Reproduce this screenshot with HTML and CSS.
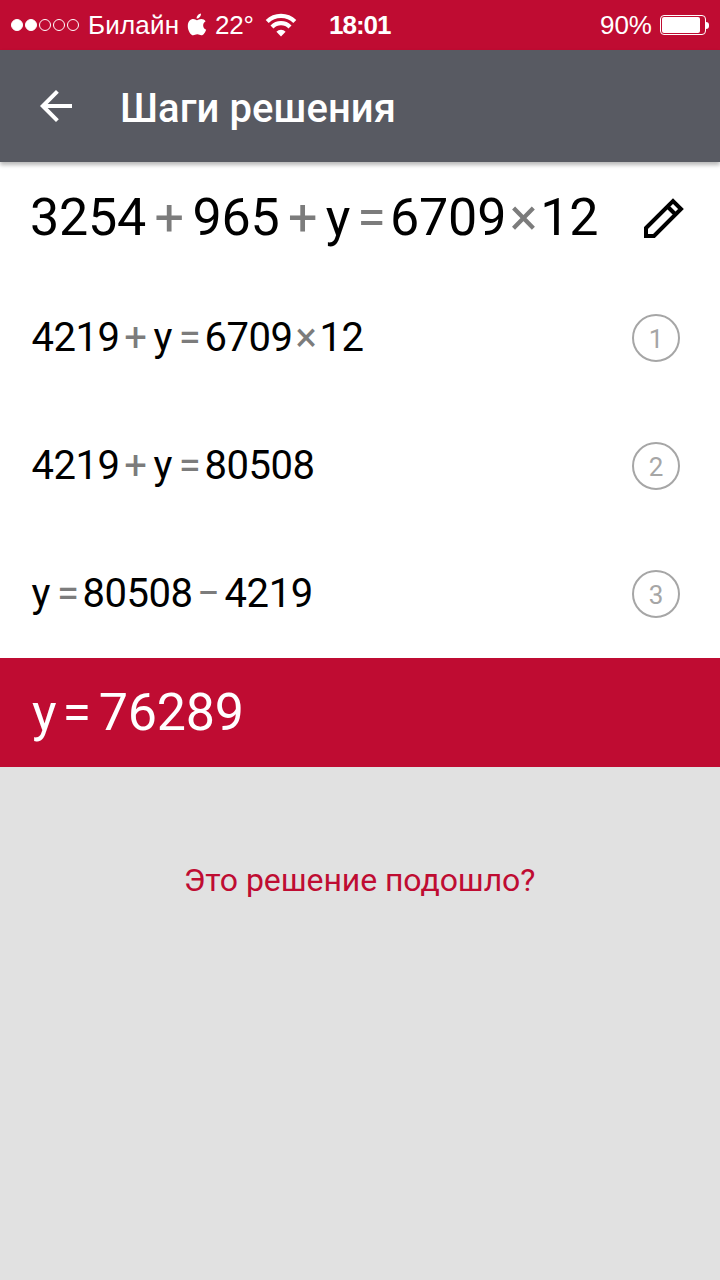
FILE: index.html
```html
<!DOCTYPE html>
<html lang="ru">
  <head>
    <meta charset="UTF-8" />
    <title>Шаги решения</title>
    <link rel="stylesheet" href="styles.css">
  </head>
  <body>
    <div class="status-bar">
      <div class="signal">
        <span class="dot full"></span>
        <span class="dot full"></span>
        <span class="dot"></span>
        <span class="dot"></span>
        <span class="dot"></span>
      </div>
      <span class="carrier">Билайн</span>
      <svg class="apple" width="20" height="24" viewBox="0 0 20 24">
        <path d="M14 0.5C14.2 3.2 12 5.6 9.6 5.6C9.4 3 11.6 0.8 14 0.5ZM10 7.2C11 7.2 12.2 6 14.4 6C16 6 17.6 6.8 18.6 8.2C15 10.4 15.6 15.3 19.2 16.7C18.4 18.9 16.6 22.3 14.4 22.3C12.8 22.3 12.2 21.3 10.3 21.3C8.4 21.3 7.7 22.3 6.2 22.3C3.8 22.3 0.8 17.6 0.8 13.2C0.8 8.6 3.5 6.1 6.2 6.1C8 6.1 9 7.2 10 7.2Z" />
      </svg>
      <span class="temp">22°</span>
      <svg class="wifi" width="32" height="24" viewBox="0 0 32 24">
        <path class="wave" d="M2.2 8.6A19.6 19.6 0 0 1 29.8 8.6" />
        <path class="wave" d="M7 14A12.5 12.5 0 0 1 25 14" />
        <path d="M11.4 18.8A6.3 6.3 0 0 1 20.6 18.8L16 23.4Z" />
      </svg>
      <span class="time">18:01</span>
      <span class="percent">90%</span>
      <div class="battery"><div class="charge" style="width: 90%"></div></div>
      <div class="battery-tip"></div>
    </div>

    <div class="toolbar">
      <svg class="back" width="32" height="32" viewBox="0 0 32 32">
        <path d="M32 16H2M17.4 1.4L2.8 16L17.4 30.6" />
      </svg>
      <h1>Шаги решения</h1>
    </div>

    <div class="steps">
      <div class="row task">
        <div class="expr">3254<i class="op plus">+</i>965<i class="op plus">+</i>y<i class="op eq">=</i>6709<i class="op times">×</i>12</div>
        <svg class="edit" width="42" height="42" viewBox="0 0 42 42">
          <path d="M3 31L30 4L38 12L11 39H3ZM24.5 9.5L32.5 17.5" />
        </svg>
      </div>
      <div class="row">
        <div class="expr">4219<i class="op plus">+</i>y<i class="op eq">=</i>6709<i class="op times">×</i>12</div>
        <div class="num">1</div>
      </div>
      <div class="row">
        <div class="expr">4219<i class="op plus">+</i>y<i class="op eq">=</i>80508</div>
        <div class="num">2</div>
      </div>
      <div class="row">
        <div class="expr">y<i class="op eq">=</i>80508<i class="op minus">−</i>4219</div>
        <div class="num">3</div>
      </div>
    </div>

    <div class="answer">
      <div class="expr">y<i class="op eq">=</i>76289</div>
    </div>

    <div class="feedback">Это решение подошло?</div>
  </body>
</html>
```

FILE: styles.css
```css
body {
  margin: 0;
  min-height: 1280px;
  font-family: Roboto, sans-serif;
  background-color: #e1e1e1;
  color: #000;
}

.status-bar {
  display: flex;
  align-items: center;
  box-sizing: border-box;
  height: 50px;
  padding: 0 11px;
  background-color: #bf0c32;
  color: #fff;
  font-family: "Liberation Sans", Arial, sans-serif;
  font-size: 26px;
  line-height: 50px;
}

.signal {
  display: flex;
  gap: 2px;
}

.dot {
  box-sizing: border-box;
  width: 12px;
  height: 12px;
  border: 1.5px solid #fff;
  border-radius: 50%;
}

.dot.full {
  background-color: #fff;
}

.carrier {
  width: 92px;
  margin-left: 9px;
  letter-spacing: 0.2px;
}

.apple {
  margin-left: 7px;
  fill: #fff;
}

.temp {
  width: 39px;
  margin-left: 8px;
  letter-spacing: -0.2px;
}

.wifi {
  margin-left: 11px;
  fill: #fff;
}

.wifi .wave {
  fill: none;
  stroke: #fff;
  stroke-width: 4.2;
}

.time {
  margin-left: 32px;
  font-weight: bold;
  letter-spacing: -1px;
}

.percent {
  margin-left: auto;
}

.battery {
  box-sizing: border-box;
  width: 46px;
  height: 20px;
  margin-left: 8px;
  padding: 1px;
  border: 1px solid #fff;
  border-radius: 4px;
}

.charge {
  height: 100%;
  border-radius: 2px;
  background-color: #fff;
}

.battery-tip {
  width: 3px;
  height: 7px;
  border-radius: 0 3px 3px 0;
  background-color: #fff;
}

.toolbar {
  position: relative;
  display: flex;
  align-items: center;
  height: 112px;
  padding-left: 40px;
  background-color: #585a62;
  color: #fff;
  box-shadow: 0 3px 4px rgba(0, 0, 0, 0.28);
}

.back {
  fill: none;
  stroke: #fff;
  stroke-width: 4;
}

.toolbar h1 {
  margin: 5px 0 0 48px;
  font-size: 40px;
  font-weight: 500;
  letter-spacing: 0.08px;
}

.steps {
  height: 496px;
  background-color: #fff;
}

.row {
  display: flex;
  align-items: center;
  justify-content: space-between;
  height: 128px;
  padding: 0 40px 0 31.5px;
}

.row.task {
  height: 112px;
  padding: 0 35px 0 30px;
}

.expr {
  margin-bottom: 2px;
  font-size: 40px;
  letter-spacing: -0.45px;
  white-space: nowrap;
}

.task .expr,
.answer .expr {
  font-size: 52px;
  letter-spacing: -0.2px;
}

.op {
  color: #7c7c7c;
  font-style: normal;
}

.plus {
  margin: 0 7px 0 4.5px;
}

.minus {
  margin: 0 5px 0 4.5px;
}

.eq {
  margin: 0 4px 0 7px;
}

.times {
  margin: 0 3px;
}

.task .plus {
  margin: 0 8.5px;
}

.task .eq {
  margin: 0 4.5px 0 7px;
}

.task .times {
  margin: 0 3px 0 3.5px;
}

.answer .eq {
  margin: 0 8px 0 6px;
}

.edit {
  fill: none;
  stroke: #000;
  stroke-width: 4;
}

.num {
  box-sizing: border-box;
  width: 48px;
  height: 48px;
  border: 2px solid #a6a6a6;
  border-radius: 50%;
  color: #a6a6a6;
  font-size: 26px;
  line-height: 46px;
  text-align: center;
}

.answer {
  display: flex;
  align-items: center;
  height: 109px;
  padding-left: 32px;
  background-color: #bf0c32;
  color: #fff;
}

.answer .expr {
  margin-bottom: 0;
}

.answer .op {
  color: #fff;
}

.feedback {
  margin-top: 94px;
  padding-right: 1px;
  color: #bf0c32;
  font-size: 32px;
  letter-spacing: -0.07px;
  line-height: 38px;
  text-align: center;
}
```
